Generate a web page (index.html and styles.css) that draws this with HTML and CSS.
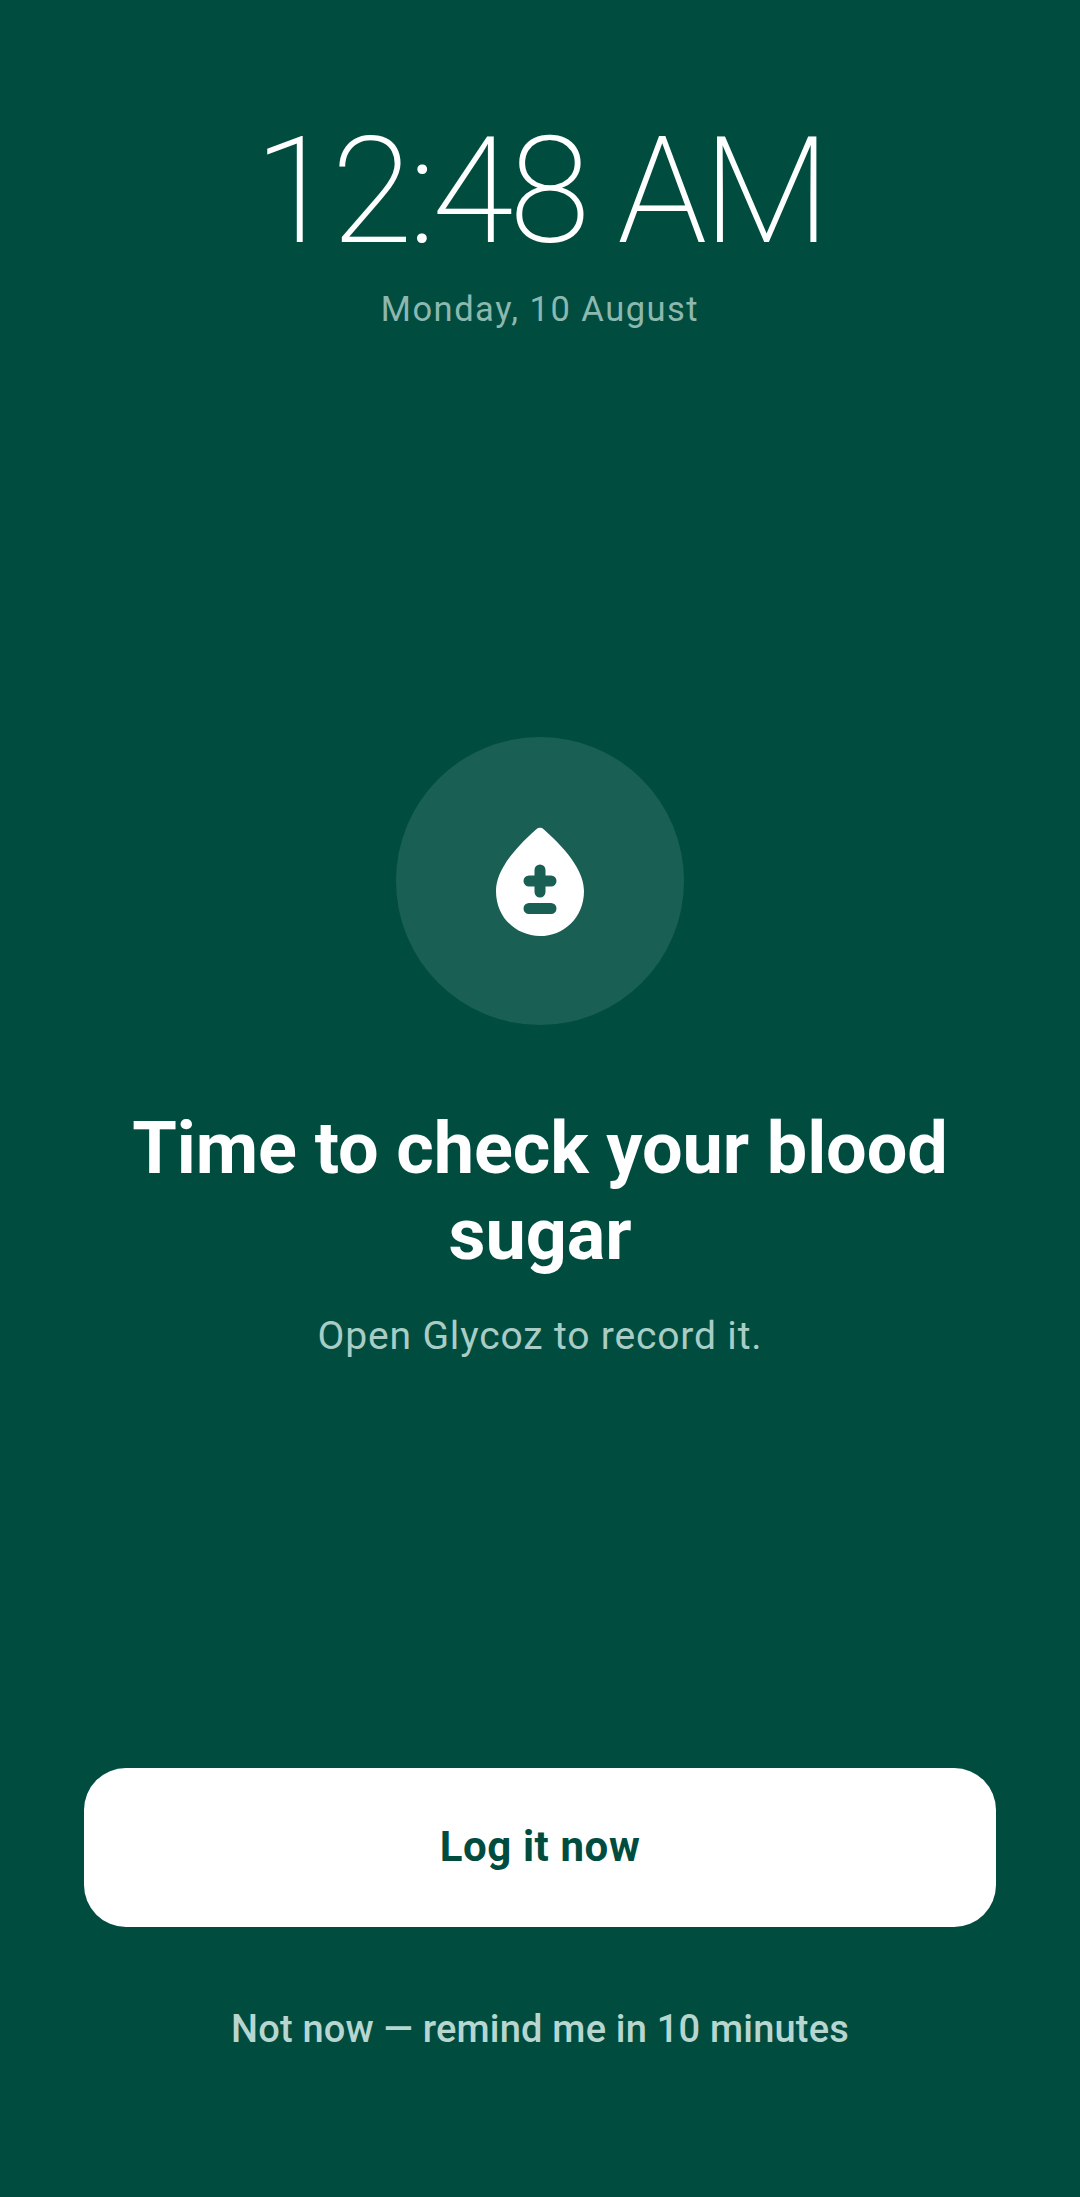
FILE: index.html
```html
<!DOCTYPE html>
<html lang="en">
<head>
    <meta charset="UTF-8">
    <meta name="viewport" content="width=device-width, initial-scale=1.0">
    <title>Glycoz reminder</title>
    <link rel="stylesheet" href="styles.css">
</head>
<body>
<main class="screen">
    <header class="clock">
        <div class="clock-time">12:48 AM</div>
        <div class="clock-date">Monday, 10 August</div>
    </header>
    <section class="prompt">
        <div class="prompt-badge">
            <svg class="prompt-icon" viewBox="0 0 24 24" aria-hidden="true">
                <path fill-rule="evenodd" d="M12.66 2.58c-.38-.33-.95-.33-1.33 0C6.45 6.88 4 10.62 4 13.8c0 4.98 3.8 8.2 8 8.2s8-3.22 8-8.2c0-3.18-2.45-6.92-7.34-11.22zM12 9a1 1 0 0 1 1 1v1h1a1 1 0 0 1 0 2h-1v1a1 1 0 0 1-2 0v-1h-1a1 1 0 0 1 0-2h1v-1a1 1 0 0 1 1-1zM10 16h4a1 1 0 0 1 0 2h-4a1 1 0 0 1 0-2z"/>
            </svg>
        </div>
        <h1 class="prompt-title">Time to check your blood sugar</h1>
        <p class="prompt-text">Open Glycoz to record it.</p>
    </section>
    <footer class="actions">
        <button class="btn-primary" type="button">Log it now</button>
        <button class="btn-snooze" type="button">Not now — remind me in 10 minutes</button>
    </footer>
</main>
</body>
</html>
```

FILE: styles.css
```css
html, body {
    margin: 0;
    padding: 0;
    height: 100%;
}
body {
    background-color: #004d40;
    color: #fff;
    font-family: Roboto, "Liberation Sans", sans-serif;
}
.screen {
    display: flex;
    flex-direction: column;
    align-items: center;
    height: 2197px;
    box-sizing: border-box;
    padding: 0 84px;
}
.clock {
    display: flex;
    flex-direction: column;
    align-items: center;
    padding-top: 104px;
}
.clock-time {
    font-size: 148px;
    font-weight: 200;
    line-height: 176px;
    letter-spacing: -4.4px;
    white-space: nowrap;
}
.clock-date {
    margin-top: 5px;
    font-size: 34.5px;
    line-height: 48px;
    letter-spacing: 1.5px;
    color: #8cb8af;
}
.prompt {
    display: flex;
    flex-direction: column;
    align-items: center;
    margin-top: 404px;
}
.prompt-badge {
    display: flex;
    align-items: center;
    justify-content: center;
    width: 288px;
    height: 288px;
    border-radius: 50%;
    background-color: rgba(255, 255, 255, 0.1);
}
.prompt-icon {
    width: 132px;
    height: 132px;
    fill: #fff;
}
.prompt-title {
    margin: 81px 0 0;
    width: 912px;
    font-size: 72px;
    font-weight: 700;
    line-height: 86px;
    letter-spacing: -0.1px;
    text-align: center;
}
.prompt-text {
    margin: 32px 0 0;
    font-size: 39px;
    line-height: 52px;
    letter-spacing: 0.84px;
    color: #a9cdc6;
}
.actions {
    display: flex;
    flex-direction: column;
    align-items: center;
    width: 100%;
    margin-top: auto;
    padding-bottom: 141px;
}
.btn-primary {
    width: 100%;
    height: 159px;
    padding-bottom: 3px;
    border: 0;
    border-radius: 42px;
    background-color: #fff;
    color: #004d40;
    font-family: inherit;
    font-size: 42px;
    font-weight: 700;
    letter-spacing: 0.6px;
}
.btn-snooze {
    margin-top: 75px;
    padding: 0;
    border: 0;
    background: none;
    color: #b8d6d0;
    font-family: inherit;
    font-size: 38px;
    font-weight: 500;
    letter-spacing: 0.2px;
    line-height: 54px;
}
```
